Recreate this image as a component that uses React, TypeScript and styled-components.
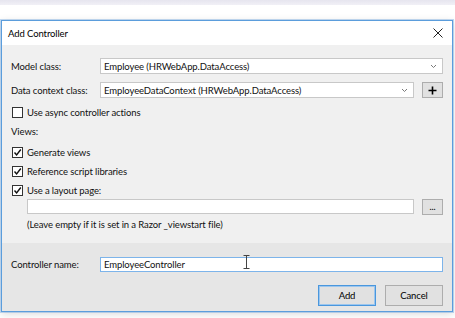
import React from "react";
import styled, { createGlobalStyle } from "styled-components";

const GlobalStyle = createGlobalStyle`
  html, body { margin: 0; padding: 0; background: #ffffff; }
  body {
    font-family: Lato, "Noto Sans", "Liberation Sans", sans-serif;
    font-size: 9.5px;
    letter-spacing: -0.1px;
    color: #111;
  }
  * { box-sizing: border-box; }
`;

const Page = styled.div`
  width: 455px;
  height: 318px;
  overflow: hidden;
  background: #ffffff;
`;

const TopStrip = styled.div`
  height: 5px;
  background: linear-gradient(#e6e5ef, #f1f0f6);
`;

const Dialog = styled.div`
  margin: 15px 0 0 1px;
  width: 452px;
  height: 292px;
  border: 1px solid #5b9ddc;
  box-shadow: 0 0 0 1px rgba(120, 170, 225, 0.45), 0 2px 8px rgba(0, 0, 0, 0.15);
  display: flex;
  flex-direction: column;
  background: #f0f0f0;
`;

const TitleBar = styled.div`
  height: 24px;
  background: #ffffff;
  display: flex;
  align-items: center;
  justify-content: space-between;
  padding: 0 6px 0 6px;
`;

const Title = styled.span`
  color: #000;
`;

const CloseBtn = styled.div`
  width: 14px;
  height: 14px;
  display: flex;
  align-items: center;
  justify-content: center;
  margin-right: 1px;
`;

const Body = styled.div`
  height: 198px;
  background: #f0f0f0;
  padding: 13px 9px 0 9px;
  display: flex;
  flex-direction: column;
`;

const Footer = styled.div`
  flex: 1;
  background: #e6e6e6;
  padding: 13px 9px 0 9px;
  display: flex;
  flex-direction: column;
`;

const FieldRow = styled.div<{ $mt?: number }>`
  display: flex;
  align-items: center;
  height: 16px;
  margin-top: ${(p) => p.$mt ?? 0}px;
`;

const Label = styled.div`
  width: 89px;
  flex: none;
  white-space: nowrap;
`;

const Combo = styled.div`
  flex: 1;
  height: 16px;
  background: #fff;
  border: 1px solid #c8c8c8;
  display: flex;
  align-items: center;
  justify-content: space-between;
  padding: 0 5px 0 3px;
  white-space: nowrap;
`;

const SmallBtn = styled.div`
  width: 21px;
  height: 16px;
  margin-left: 8px;
  flex: none;
  background: #e1e1e1;
  border: 1px solid #adadad;
  display: flex;
  align-items: center;
  justify-content: center;
  font-size: 9px;
  line-height: 1;
  color: #000;
`;

const CheckRow = styled.div<{ $mt: number }>`
  display: flex;
  align-items: center;
  height: 14px;
  margin-top: ${(p) => p.$mt}px;
  padding-left: 1px;
  gap: 4px;
  white-space: nowrap;
`;

const Box = styled.div`
  width: 11px;
  height: 11px;
  border: 1px solid #333;
  background: #fff;
  display: flex;
  align-items: center;
  justify-content: center;
`;

const TextLine = styled.div<{ $mt: number; $ml?: number }>`
  height: 14px;
  line-height: 14px;
  margin-top: ${(p) => p.$mt}px;
  margin-left: ${(p) => p.$ml ?? 0}px;
  white-space: nowrap;
`;

const InputRow = styled.div`
  display: flex;
  align-items: center;
  margin: 2px 0 0 16px;
  height: 15px;
`;

const TextBox = styled.div<{ $focused?: boolean }>`
  flex: 1;
  height: 15px;
  background: #fff;
  border: 1px solid ${(p) => (p.$focused ? "#7db4ea" : "#c8c8c8")};
  display: flex;
  align-items: center;
  padding: 0 3px;
  position: relative;
  white-space: nowrap;
`;

const Buttons = styled.div`
  display: flex;
  justify-content: flex-end;
  gap: 9px;
  margin-top: 13px;
`;

const Button = styled.div<{ $primary?: boolean }>`
  width: 58px;
  height: 21px;
  background: #e1e1e1;
  border: 1px solid ${(p) => (p.$primary ? "#4a97dd" : "#adadad")};
  box-shadow: ${(p) => (p.$primary ? "inset 0 0 0 1px #9cc6ee" : "none")};
  display: flex;
  align-items: center;
  justify-content: center;
  color: #000;
`;

const Cursor = styled.svg`
  position: absolute;
  left: 142px;
  top: -3px;
`;

const Chevron = () => (
  <svg width="7" height="5" viewBox="0 0 7 5">
    <path d="M1 1 L3.5 3.5 L6 1" stroke="#7a7a7a" strokeWidth="1" fill="none" />
  </svg>
);

const Check = () => (
  <svg width="9" height="9" viewBox="0 0 9 9">
    <path d="M1.5 4.5 L3.6 7 L7.8 1.5" stroke="#111" strokeWidth="1.4" fill="none" />
  </svg>
);

const CheckItem = ({ label, checked, mt }: { label: string; checked: boolean; mt: number }) => (
  <CheckRow $mt={mt}>
    <Box>{checked && <Check />}</Box>
    <span>{label}</span>
  </CheckRow>
);

export default function App() {
  return (
    <Page>
      <GlobalStyle />
      <TopStrip />
      <Dialog>
        <TitleBar>
          <Title>Add Controller</Title>
          <CloseBtn>
            <svg width="10" height="10" viewBox="0 0 10 10">
              <path d="M0.5 0.5 L9.5 9.5 M9.5 0.5 L0.5 9.5" stroke="#222" strokeWidth="1" />
            </svg>
          </CloseBtn>
        </TitleBar>
        <Body>
          <FieldRow>
            <Label>Model class:</Label>
            <Combo>
              <span>Employee (HRWebApp.DataAccess)</span>
              <Chevron />
            </Combo>
          </FieldRow>
          <FieldRow $mt={8}>
            <Label>Data context class:</Label>
            <Combo>
              <span>EmployeeDataContext (HRWebApp.DataAccess)</span>
              <Chevron />
            </Combo>
            <SmallBtn>
              <svg width="9" height="9" viewBox="0 0 9 9">
                <path d="M4.5 0.5 V8.5 M0.5 4.5 H8.5" stroke="#000" strokeWidth="1.6" />
              </svg>
            </SmallBtn>
          </FieldRow>
          <CheckItem label="Use async controller actions" checked={false} mt={7} />
          <TextLine $mt={6}>Views:</TextLine>
          <CheckItem label="Generate views" checked mt={6} />
          <CheckItem label="Reference script libraries" checked mt={5} />
          <CheckItem label="Use a layout page:" checked mt={5} />
          <InputRow>
            <TextBox />
            <SmallBtn>...</SmallBtn>
          </InputRow>
          <TextLine $mt={4} $ml={16}>
            (Leave empty if it is set in a Razor _viewstart file)
          </TextLine>
        </Body>
        <Footer>
          <FieldRow>
            <Label>Controller name:</Label>
            <TextBox $focused>
              EmployeeController
              <Cursor width="7" height="14" viewBox="0 0 7 14">
                <path d="M0.5 0.5 H6.5 M3.5 0.5 V13.5 M0.5 13.5 H6.5" stroke="#444" strokeWidth="1" fill="none" />
              </Cursor>
            </TextBox>
          </FieldRow>
          <Buttons>
            <Button $primary>Add</Button>
            <Button>Cancel</Button>
          </Buttons>
        </Footer>
      </Dialog>
    </Page>
  );
}
